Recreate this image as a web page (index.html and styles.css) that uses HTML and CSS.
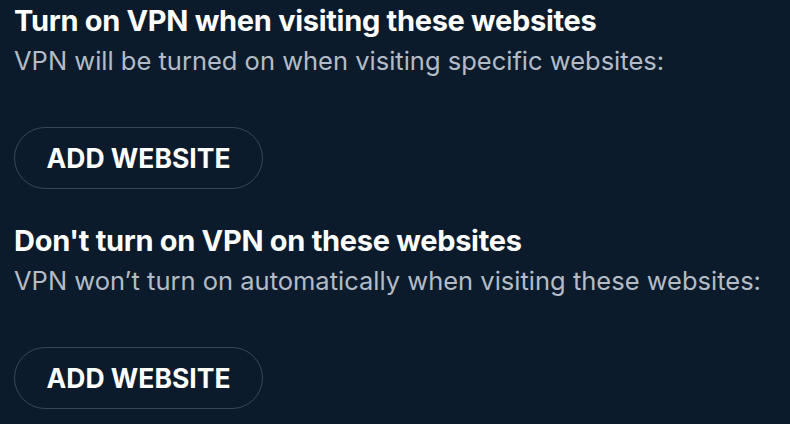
FILE: index.html
```html
<!DOCTYPE html>
<html>
<head>
<meta charset="utf-8">
<link rel="stylesheet" href="styles.css">
</head>
<body>
<section class="section">
  <h2 class="title">Turn on VPN when visiting these websites</h2>
  <p class="desc">VPN will be turned on when visiting specific websites:</p>
  <button class="btn">ADD WEBSITE</button>
</section>
<section class="section">
  <h2 class="title">Don't turn on VPN on these websites</h2>
  <p class="desc">VPN won’t turn on automatically when visiting these websites:</p>
  <button class="btn">ADD WEBSITE</button>
</section>
</body>
</html>
```
FILE: styles.css
```css
html, body {
  margin: 0;
  padding: 0;
  background: #0b1b2b;
  width: 790px;
  height: 424px;
  overflow: hidden;
}
body {
  font-family: "Inter", "Liberation Sans", sans-serif;
  padding: 3px 14px 0;
  box-sizing: border-box;
}
.section {
  display: flex;
  flex-direction: column;
  align-items: flex-start;
  margin-bottom: 34px;
}
.title {
  margin: 0;
  color: #ffffff;
  font-size: 29px;
  font-weight: 700;
  line-height: 36px;
  letter-spacing: -0.3px;
}
.desc {
  margin: 5px 0 0;
  color: #b3bcc6;
  font-size: 25.5px;
  font-weight: 400;
  line-height: 34px;
}
.btn {
  margin-top: 49px;
  width: 249px;
  height: 62px;
  border: 1.5px solid #3a4654;
  border-radius: 31px;
  background: transparent;
  color: #ffffff;
  font-family: inherit;
  font-size: 26.5px;
  font-weight: 700;
  padding: 0;
  cursor: pointer;
}
```
